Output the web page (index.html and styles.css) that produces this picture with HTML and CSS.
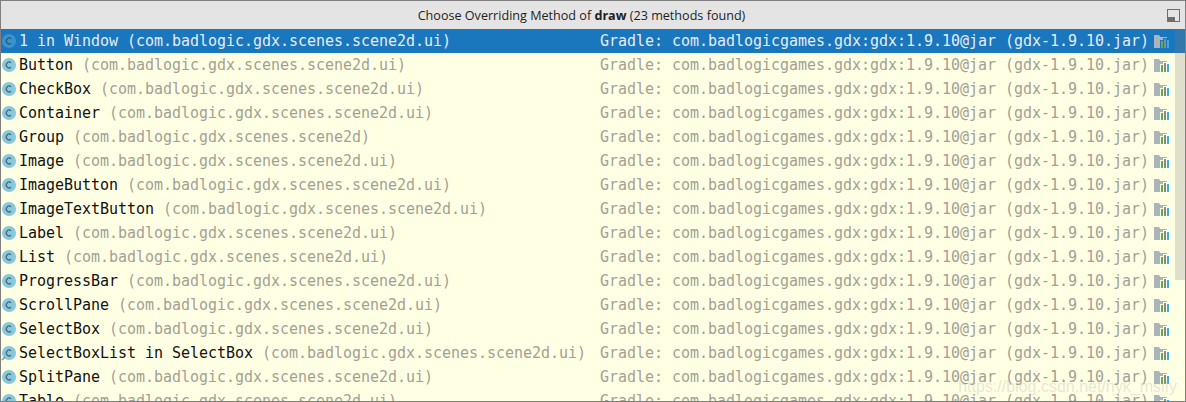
FILE: index.html
```html
<!DOCTYPE html>
<html lang="en">
<head>
    <meta charset="UTF-8">
    <title>Choose Overriding Method</title>
    <link rel="stylesheet" href="styles.css">
</head>
<body>
    <svg class="defs" width="0" height="0">
        <symbol id="class-icon" viewBox="0 0 16 16">
            <circle class="disc" cx="8" cy="8" r="7"/>
            <path class="letter" d="M10.2 5.9A2.9 2.9 0 1 0 10.2 10.1"/>
        </symbol>
        <symbol id="inner-class-icon" viewBox="0 0 16 16">
            <circle class="disc" cx="8" cy="8" r="7"/>
            <path class="letter" d="M10.2 5.9A2.9 2.9 0 1 0 10.2 10.1"/>
            <path class="inner-mark" d="M1 15L4 12"/>
        </symbol>
        <symbol id="jar-icon" viewBox="0 0 16 13">
            <path class="folder" d="M0 0h5l1.5 2H13v11H0z"/>
            <path class="gap" d="M6 5h3V3h4v10H6z"/>
            <rect x="7" y="6" width="2" height="7" fill="#5fb040"/>
            <rect x="10" y="4" width="2" height="9" fill="#7f8c95"/>
            <rect x="13" y="5" width="2" height="8" fill="#3fa9e0"/>
        </symbol>
    </svg>
    <div class="popup">
        <div class="title-bar">
            <span class="title">Choose Overriding Method of <b>draw</b> (23 methods found)</span>
            <svg class="pin" width="14" height="14" viewBox="0 0 14 14">
                <rect x="0.5" y="0.5" width="12" height="12" fill="none" stroke="#6e6e6e"/>
                <rect x="1" y="8" width="7" height="4" fill="#6e6e6e"/>
            </svg>
        </div>
        <div class="list">
            <div class="row selected">
                <svg class="icon"><use href="#class-icon"/></svg>
                <span class="left">1 in Window <span class="pkg">(com.badlogic.gdx.scenes.scene2d.ui)</span></span>
                <span class="right">Gradle: com.badlogicgames.gdx:gdx:1.9.10@jar (gdx-1.9.10.jar)</span>
                <svg class="jar"><use href="#jar-icon"/></svg>
            </div>
            <div class="row">
                <svg class="icon"><use href="#class-icon"/></svg>
                <span class="left">Button <span class="pkg">(com.badlogic.gdx.scenes.scene2d.ui)</span></span>
                <span class="right">Gradle: com.badlogicgames.gdx:gdx:1.9.10@jar (gdx-1.9.10.jar)</span>
                <svg class="jar"><use href="#jar-icon"/></svg>
            </div>
            <div class="row">
                <svg class="icon"><use href="#class-icon"/></svg>
                <span class="left">CheckBox <span class="pkg">(com.badlogic.gdx.scenes.scene2d.ui)</span></span>
                <span class="right">Gradle: com.badlogicgames.gdx:gdx:1.9.10@jar (gdx-1.9.10.jar)</span>
                <svg class="jar"><use href="#jar-icon"/></svg>
            </div>
            <div class="row">
                <svg class="icon"><use href="#class-icon"/></svg>
                <span class="left">Container <span class="pkg">(com.badlogic.gdx.scenes.scene2d.ui)</span></span>
                <span class="right">Gradle: com.badlogicgames.gdx:gdx:1.9.10@jar (gdx-1.9.10.jar)</span>
                <svg class="jar"><use href="#jar-icon"/></svg>
            </div>
            <div class="row">
                <svg class="icon"><use href="#class-icon"/></svg>
                <span class="left">Group <span class="pkg">(com.badlogic.gdx.scenes.scene2d)</span></span>
                <span class="right">Gradle: com.badlogicgames.gdx:gdx:1.9.10@jar (gdx-1.9.10.jar)</span>
                <svg class="jar"><use href="#jar-icon"/></svg>
            </div>
            <div class="row">
                <svg class="icon"><use href="#class-icon"/></svg>
                <span class="left">Image <span class="pkg">(com.badlogic.gdx.scenes.scene2d.ui)</span></span>
                <span class="right">Gradle: com.badlogicgames.gdx:gdx:1.9.10@jar (gdx-1.9.10.jar)</span>
                <svg class="jar"><use href="#jar-icon"/></svg>
            </div>
            <div class="row">
                <svg class="icon"><use href="#class-icon"/></svg>
                <span class="left">ImageButton <span class="pkg">(com.badlogic.gdx.scenes.scene2d.ui)</span></span>
                <span class="right">Gradle: com.badlogicgames.gdx:gdx:1.9.10@jar (gdx-1.9.10.jar)</span>
                <svg class="jar"><use href="#jar-icon"/></svg>
            </div>
            <div class="row">
                <svg class="icon"><use href="#class-icon"/></svg>
                <span class="left">ImageTextButton <span class="pkg">(com.badlogic.gdx.scenes.scene2d.ui)</span></span>
                <span class="right">Gradle: com.badlogicgames.gdx:gdx:1.9.10@jar (gdx-1.9.10.jar)</span>
                <svg class="jar"><use href="#jar-icon"/></svg>
            </div>
            <div class="row">
                <svg class="icon"><use href="#class-icon"/></svg>
                <span class="left">Label <span class="pkg">(com.badlogic.gdx.scenes.scene2d.ui)</span></span>
                <span class="right">Gradle: com.badlogicgames.gdx:gdx:1.9.10@jar (gdx-1.9.10.jar)</span>
                <svg class="jar"><use href="#jar-icon"/></svg>
            </div>
            <div class="row">
                <svg class="icon"><use href="#class-icon"/></svg>
                <span class="left">List <span class="pkg">(com.badlogic.gdx.scenes.scene2d.ui)</span></span>
                <span class="right">Gradle: com.badlogicgames.gdx:gdx:1.9.10@jar (gdx-1.9.10.jar)</span>
                <svg class="jar"><use href="#jar-icon"/></svg>
            </div>
            <div class="row">
                <svg class="icon"><use href="#class-icon"/></svg>
                <span class="left">ProgressBar <span class="pkg">(com.badlogic.gdx.scenes.scene2d.ui)</span></span>
                <span class="right">Gradle: com.badlogicgames.gdx:gdx:1.9.10@jar (gdx-1.9.10.jar)</span>
                <svg class="jar"><use href="#jar-icon"/></svg>
            </div>
            <div class="row">
                <svg class="icon"><use href="#class-icon"/></svg>
                <span class="left">ScrollPane <span class="pkg">(com.badlogic.gdx.scenes.scene2d.ui)</span></span>
                <span class="right">Gradle: com.badlogicgames.gdx:gdx:1.9.10@jar (gdx-1.9.10.jar)</span>
                <svg class="jar"><use href="#jar-icon"/></svg>
            </div>
            <div class="row">
                <svg class="icon"><use href="#class-icon"/></svg>
                <span class="left">SelectBox <span class="pkg">(com.badlogic.gdx.scenes.scene2d.ui)</span></span>
                <span class="right">Gradle: com.badlogicgames.gdx:gdx:1.9.10@jar (gdx-1.9.10.jar)</span>
                <svg class="jar"><use href="#jar-icon"/></svg>
            </div>
            <div class="row">
                <svg class="icon"><use href="#inner-class-icon"/></svg>
                <span class="left">SelectBoxList in SelectBox <span class="pkg">(com.badlogic.gdx.scenes.scene2d.ui)</span></span>
                <span class="right">Gradle: com.badlogicgames.gdx:gdx:1.9.10@jar (gdx-1.9.10.jar)</span>
                <svg class="jar"><use href="#jar-icon"/></svg>
            </div>
            <div class="row">
                <svg class="icon"><use href="#class-icon"/></svg>
                <span class="left">SplitPane <span class="pkg">(com.badlogic.gdx.scenes.scene2d.ui)</span></span>
                <span class="right">Gradle: com.badlogicgames.gdx:gdx:1.9.10@jar (gdx-1.9.10.jar)</span>
                <svg class="jar"><use href="#jar-icon"/></svg>
            </div>
            <div class="row">
                <svg class="icon"><use href="#class-icon"/></svg>
                <span class="left">Table <span class="pkg">(com.badlogic.gdx.scenes.scene2d.ui)</span></span>
                <span class="right">Gradle: com.badlogicgames.gdx:gdx:1.9.10@jar (gdx-1.9.10.jar)</span>
                <svg class="jar"><use href="#jar-icon"/></svg>
            </div>
            <div class="thumb"></div>
            <span class="watermark">https://blog.csdn.net/nyk_msify</span>
        </div>
    </div>
</body>
</html>
```

FILE: styles.css
```css
* {
    box-sizing: border-box;
}
html, body {
    margin: 0;
    height: 100%;
}
body {
    overflow: hidden;
    background-color: #ffffe4;
}
.defs {
    position: absolute;
}
.popup {
    height: 402px;
    border: 1px solid #7f7f7f;
    display: flex;
    flex-direction: column;
    overflow: hidden;
}
.title-bar {
    flex: none;
    height: 28px;
    padding-right: 23px;
    background-color: #e4e4e4;
    display: flex;
    align-items: center;
    justify-content: center;
    position: relative;
    font-family: "Open Sans", sans-serif;
    font-size: 12.6px;
    color: #1e1e1e;
}
.pin {
    position: absolute;
    right: 4px;
    top: 8px;
}
.list {
    flex: 1;
    min-height: 0;
    position: relative;
    overflow: hidden;
    font-family: "DejaVu Sans Mono", monospace;
    font-size: 15px;
    letter-spacing: -0.03px;
}
.row {
    --row-bg: #ffffe4;
    --disc: #85c9de;
    --letter: #55656c;
    height: 24px;
    display: flex;
    align-items: center;
    white-space: nowrap;
    background-color: var(--row-bg);
    color: #111;
}
.row .icon {
    flex: none;
    width: 16px;
    height: 16px;
    margin-right: 2px;
}
.disc {
    fill: var(--disc);
}
.letter {
    fill: none;
    stroke: var(--letter);
    stroke-width: 1.2;
}
.inner-mark {
    fill: none;
    stroke: #8a8a8a;
    stroke-width: 1.4;
}
.row .jar {
    flex: none;
    width: 16px;
    height: 13px;
    margin-left: 1px;
}
.folder {
    fill: #a9b4bb;
}
.gap {
    fill: var(--row-bg);
}
.row .left {
    width: 581px;
    flex: none;
    overflow: hidden;
}
.row .pkg,
.row .right {
    color: #a39f95;
}
.row .right {
    width: 553px;
    flex: none;
}
.row.selected {
    --row-bg: #1a76bd;
    --disc: #3a94cc;
    --letter: #2c5a7a;
    color: #e4edf6;
}
.row.selected .pkg,
.row.selected .right {
    color: #e4edf6;
}
.row.selected .folder {
    fill: #8fa9bf;
}
.thumb {
    position: absolute;
    top: 0;
    right: 0;
    width: 10px;
    height: 251px;
    background-color: rgba(128, 128, 128, 0.25);
}
.watermark {
    position: absolute;
    right: 8px;
    bottom: 5px;
    font-family: "Liberation Sans", sans-serif;
    font-size: 16px;
    letter-spacing: 0;
    color: rgba(170, 170, 170, 0.3);
}
```
